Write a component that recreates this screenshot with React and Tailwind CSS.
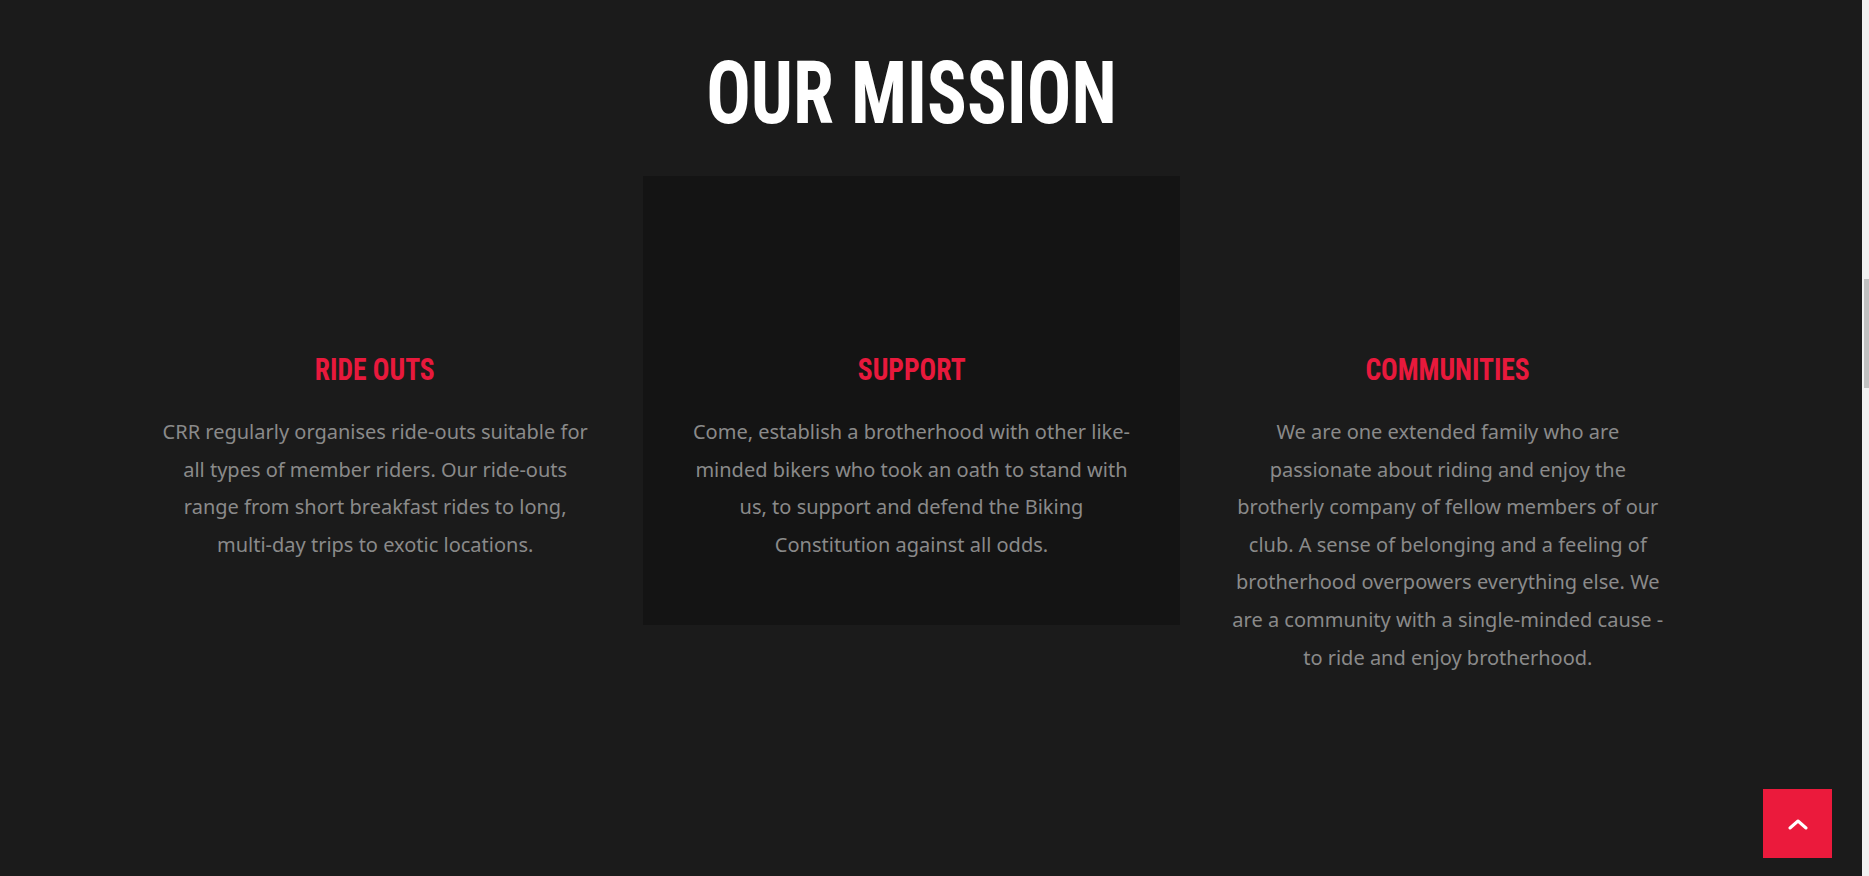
const items = [
  {
    title: 'RIDE OUTS',
    text: 'CRR regularly organises ride-outs suitable for all types of member riders. Our ride-outs range from short breakfast rides to long, multi-day trips to exotic locations.',
    dark: false,
  },
  {
    title: 'SUPPORT',
    text: 'Come, establish a brotherhood with other like-minded bikers who took an oath to stand with us, to support and defend the Biking Constitution against all odds.',
    dark: true,
  },
  {
    title: 'COMMUNITIES',
    text: 'We are one extended family who are passionate about riding and enjoy the brotherly company of fellow members of our club. A sense of belonging and a feeling of brotherhood overpowers everything else. We are a community with a single-minded cause - to ride and enjoy brotherhood.',
    dark: false,
  },
];

function Column({ title, text, dark }) {
  return (
    <div className={`${dark ? 'bg-[#141414]' : ''} px-[47px] pt-[173px] pb-[62px] text-center`}>
      <h3
        className="text-[32px] leading-[40px] font-bold text-[#e8193c]"
        style={{ fontFamily: 'Roboto, "Open Sans", sans-serif', fontStretch: 'condensed' }}
      >
        <span className="inline-block scale-x-[0.86]">{title}</span>
      </h3>
      <p className="mt-6 text-[20px] leading-[37.6px] text-[#8a8a8a]" style={{ fontFamily: '"Noto Sans", "Open Sans", sans-serif' }}>
        {text}
      </p>
    </div>
  );
}

export default function App() {
  return (
    <div className="relative flex h-[876px] w-full overflow-hidden bg-[#1b1b1b]">
      <main className="flex-1">
        <h1
          className="pt-[50px] pl-[107px] w-[1716px] text-center text-[87px] leading-[87px] font-bold text-white"
          style={{ fontFamily: 'Roboto, "Open Sans", sans-serif', fontStretch: 'condensed' }}
        >
          <span className="inline-block scale-x-[0.85]">OUR MISSION</span>
        </h1>
        <div className="mt-[39px] ml-[107px] grid w-[1609px] grid-cols-3 items-start">
          {items.map((it) => (
            <Column key={it.title} {...it} />
          ))}
        </div>
      </main>
      <div className="flex w-[7px] flex-col bg-[#f1f1f1] pt-[279px]">
        <div className="ml-[2px] h-[109px] w-[5px] bg-[#c1c1c1]" />
      </div>
      <button className="absolute right-[37px] bottom-[18px] flex h-[69px] w-[69px] items-center justify-center bg-[#eb1a3c]">
        <svg width="20" height="12" viewBox="0 0 20 12" fill="none">
          <path d="M2 10 L10 3 L18 10" stroke="white" strokeWidth="3" strokeLinecap="round" strokeLinejoin="round" />
        </svg>
      </button>
    </div>
  );
}
